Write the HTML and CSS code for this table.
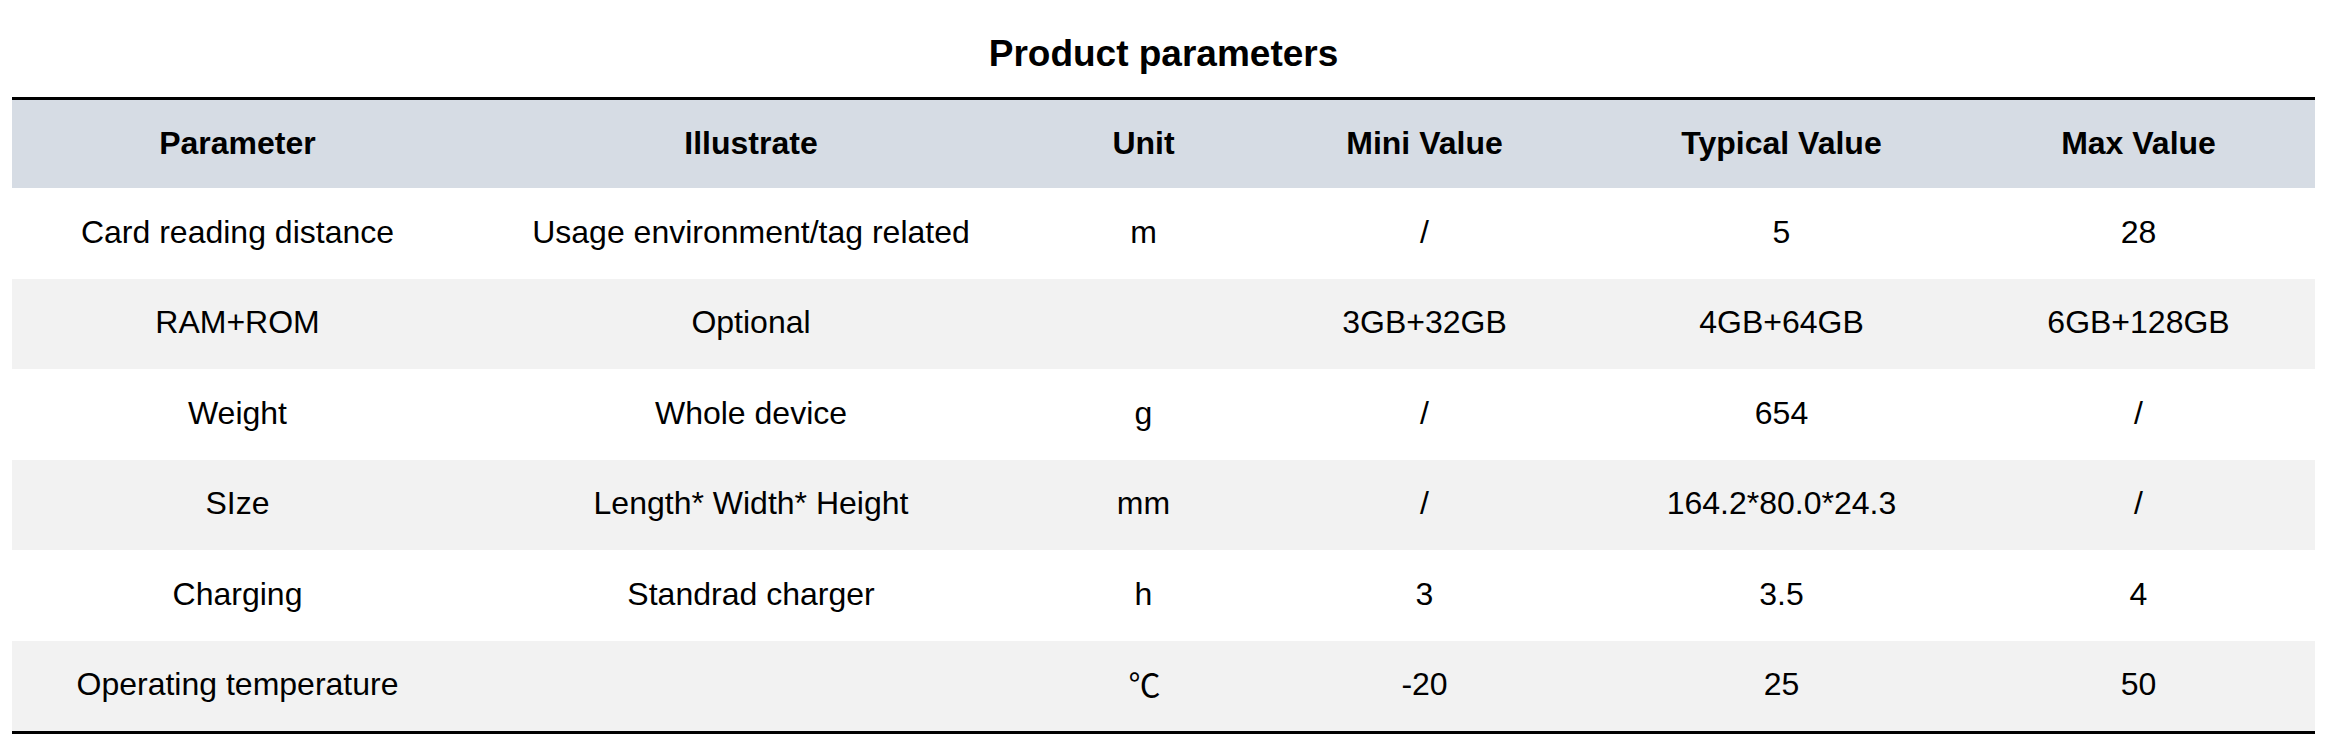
FILE: index.html
```html
<!DOCTYPE html>
<html lang="en">
<head>
<meta charset="utf-8">
<title>Product parameters</title>
<link rel="stylesheet" href="styles.css">
</head>
<body>
<div class="page">
  <h1 class="title">Product parameters</h1>
  <table class="params">
    <colgroup>
      <col class="c1"><col class="c2"><col class="c3"><col class="c4"><col class="c5"><col class="c6">
    </colgroup>
    <thead>
      <tr class="head">
        <th>Parameter</th><th>Illustrate</th><th>Unit</th><th>Mini Value</th><th>Typical Value</th><th>Max Value</th>
      </tr>
    </thead>
    <tbody>
      <tr class="row"><td>Card reading distance</td><td>Usage environment/tag related</td><td>m</td><td>/</td><td>5</td><td>28</td></tr>
      <tr class="row alt"><td>RAM+ROM</td><td>Optional</td><td></td><td>3GB+32GB</td><td>4GB+64GB</td><td>6GB+128GB</td></tr>
      <tr class="row"><td>Weight</td><td>Whole device</td><td>g</td><td>/</td><td>654</td><td>/</td></tr>
      <tr class="row alt"><td>SIze</td><td>Length* Width* Height</td><td>mm</td><td>/</td><td>164.2*80.0*24.3</td><td>/</td></tr>
      <tr class="row"><td>Charging</td><td>Standrad charger</td><td>h</td><td>3</td><td>3.5</td><td>4</td></tr>
      <tr class="row alt"><td>Operating temperature</td><td></td><td><span class="deg">℃</span></td><td>-20</td><td>25</td><td>50</td></tr>
    </tbody>
  </table>
</div>
</body>
</html>
```

FILE: styles.css
```css
html, body {
  margin: 0;
  padding: 0;
  background: #ffffff;
}

.page {
  padding: 0 12px;
  font-family: "Liberation Sans", Arial, "Noto Sans CJK SC", sans-serif;
  color: #000000;
}

.title {
  margin: 35px 0 25px 0;
  font-size: 37px;
  line-height: 37px;
  font-weight: bold;
  text-align: center;
}

.params {
  width: 2303px;
  table-layout: fixed;
  border-collapse: separate;
  border-spacing: 0;
  border-top: 3px solid #000000;
  border-bottom: 3px solid #000000;
  font-size: 32px;
}

.c1 { width: 451px; }
.c2 { width: 576px; }
.c3 { width: 209px; }
.c4 { width: 353px; }
.c5 { width: 361px; }
.c6 { width: 353px; }

.params th,
.params td {
  padding: 0 0 3px 0;
  text-align: center;
  vertical-align: middle;
  white-space: nowrap;
  line-height: 36px;
}

.head {
  height: 88px;
  background: #d6dce4;
}

.head th {
  font-weight: bold;
}

.row {
  height: 90.5px;
  background: #ffffff;
}

.row td {
  font-weight: normal;
}

.row.alt {
  background: #f2f2f2;
}

.deg {
  font-family: "Noto Sans CJK SC", "Liberation Sans", sans-serif;
  letter-spacing: -2px;
}
```
